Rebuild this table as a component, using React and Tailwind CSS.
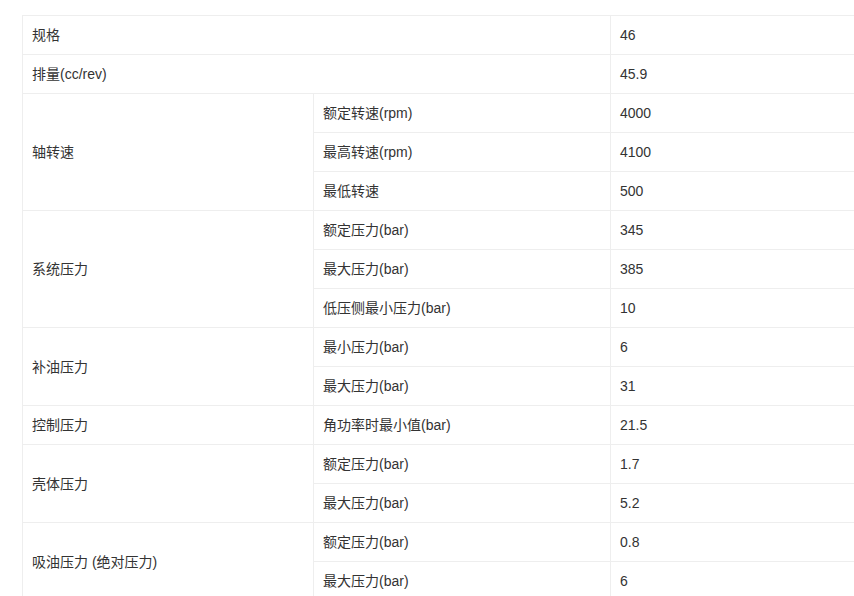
import React from "react";

const td = "border border-[#eeeeee] px-[9px] py-[9px] leading-[20px] align-middle";

export default function App() {
  const rows = [
    { a: "规格", c: "46", span2: true },
    { a: "排量(cc/rev)", c: "45.9", span2: true },
    { a: "轴转速", rs: 3, b: "额定转速(rpm)", c: "4000" },
    { b: "最高转速(rpm)", c: "4100" },
    { b: "最低转速", c: "500" },
    { a: "系统压力", rs: 3, b: "额定压力(bar)", c: "345" },
    { b: "最大压力(bar)", c: "385" },
    { b: "低压侧最小压力(bar)", c: "10" },
    { a: "补油压力", rs: 2, b: "最小压力(bar)", c: "6" },
    { b: "最大压力(bar)", c: "31" },
    { a: "控制压力", rs: 1, b: "角功率时最小值(bar)", c: "21.5" },
    { a: "壳体压力", rs: 2, b: "额定压力(bar)", c: "1.7" },
    { b: "最大压力(bar)", c: "5.2" },
    { a: "吸油压力 (绝对压力)", rs: 2, b: "额定压力(bar)", c: "0.8" },
    { b: "最大压力(bar)", c: "6" },
  ];
  return (
    <div
      className="w-[854px] h-[596px] overflow-hidden bg-white pl-[22px] pt-[15px] text-[14px] text-[#333333]"
      style={{ fontFamily: '"Liberation Sans", Arial, "Noto Sans CJK SC", sans-serif' }}
    >
      <table className="border-collapse w-[900px] table-fixed">
        <colgroup>
          <col className="w-[291px]" />
          <col className="w-[297px]" />
          <col />
        </colgroup>
        <tbody>
          {rows.map((r, i) => (
            <tr key={i}>
              {r.span2 ? (
                <td className={td} colSpan={2}>{r.a}</td>
              ) : (
                <>
                  {r.a !== undefined && (
                    <td className={td} rowSpan={r.rs}>{r.a}</td>
                  )}
                  <td className={td}>{r.b}</td>
                </>
              )}
              <td className={td}>{r.c}</td>
            </tr>
          ))}
        </tbody>
      </table>
    </div>
  );
}
